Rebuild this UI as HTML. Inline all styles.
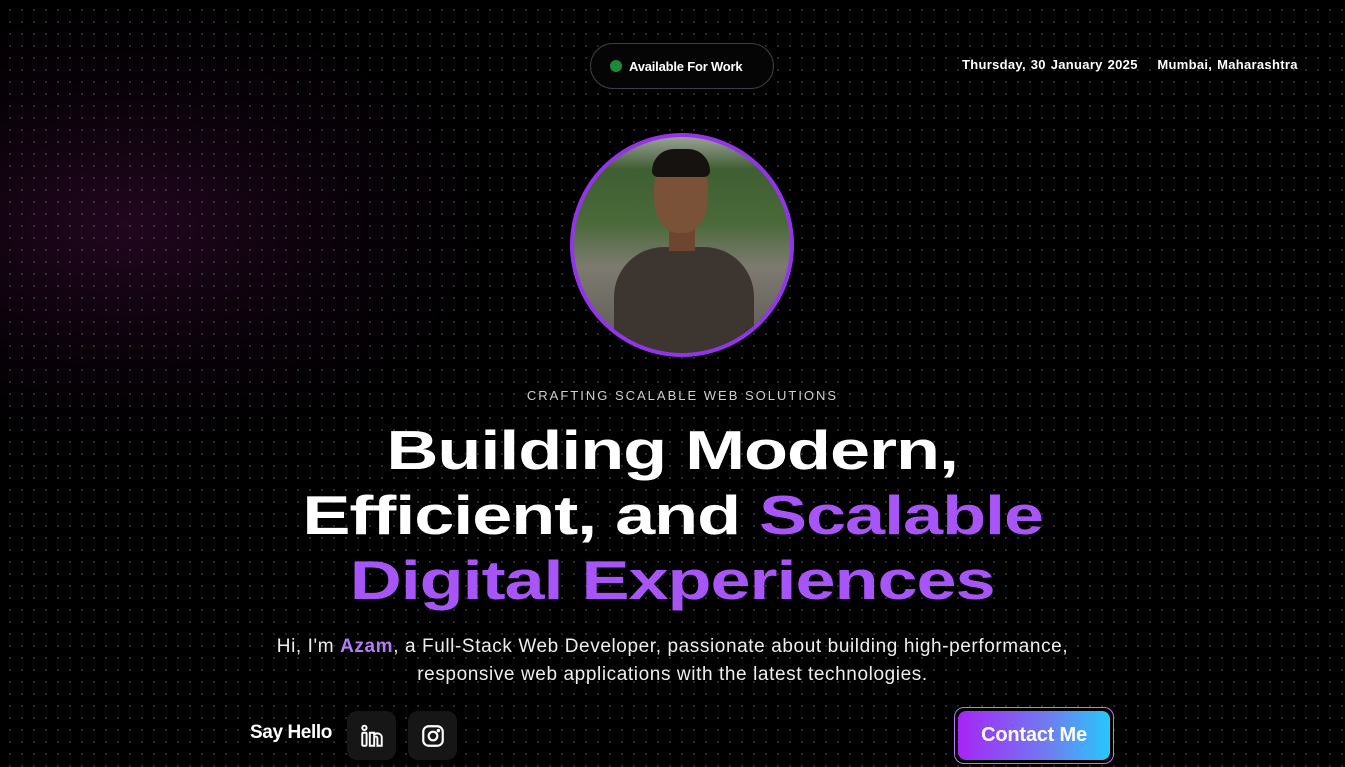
<!DOCTYPE html>
<html><head><meta charset="utf-8"><style>
*{margin:0;padding:0;box-sizing:border-box}
body{width:1345px;height:767px;overflow:hidden;background:#000;font-family:"Liberation Sans",sans-serif;color:#fff;position:relative}
.bg{position:absolute;inset:0;background-image:radial-gradient(circle,rgba(255,255,255,.16) 1px,transparent 1.3px);background-size:12px 12px;background-position:4px 4px}
.glow{position:absolute;left:-250px;top:0px;width:750px;height:450px;background:radial-gradient(ellipse at center,rgba(110,20,100,.3),rgba(60,10,60,.12) 45%,transparent 70%)}
.pill{position:absolute;left:590px;top:43px;width:184px;height:46px;border:1px solid #3a3f4a;border-radius:23px;background:#050505;display:flex;align-items:center;padding-left:19px;font-size:13px;font-weight:bold;letter-spacing:-.2px}
.pill i{width:12px;height:12px;border-radius:50%;background:#1c8a3a;margin-right:7px}
.date{position:absolute;left:962px;top:57px;font-size:13px;font-weight:bold;letter-spacing:.3px;word-spacing:1px}
.photo{position:absolute;left:570px;top:133px;width:224px;height:224px;border-radius:50%;border:4px solid #9333ea;overflow:hidden;background:linear-gradient(180deg,#9aa096 0%,#3f5e32 15%,#4a6a3a 40%,#7d7a70 60%,#5a5852 100%)}
.shirt{position:absolute;left:40px;top:110px;width:140px;height:130px;border-radius:50px 50px 0 0;background:#3d3630}
.head{position:absolute;left:80px;top:18px;width:54px;height:78px;border-radius:45%;background:#7a5238}
.hair{position:absolute;left:78px;top:12px;width:58px;height:28px;border-radius:30px 30px 8px 8px;background:#151210}
.neck{position:absolute;left:95px;top:88px;width:26px;height:26px;background:#6d4630}
.sub{position:absolute;top:388px;left:10px;width:100%;text-align:center;font-size:13px;letter-spacing:2px;color:#cfcfcf}
h1{position:absolute;top:418px;left:0;width:100%;text-align:center;font-size:55px;font-weight:bold;line-height:65px;letter-spacing:-.8px}
h1 span.l{display:inline-block;transform:scaleX(1.31)}
.p{color:#a855f7}
.para{position:absolute;top:633px;left:0;width:100%;text-align:center;font-size:19px;line-height:28px;color:#eee;letter-spacing:.6px}
.para b{color:#b57cf5}
.say{position:absolute;left:250px;top:722px;font-size:19px;font-weight:bold;letter-spacing:-.4px}
.ic{position:absolute;top:711px;width:49px;height:49px;border-radius:10px;background:#161616;display:flex;align-items:center;justify-content:center}
.cta{position:absolute;left:954px;top:707px;width:160px;height:57px;border:1px solid #b87af0;border-radius:10px;padding:3px}
.cta div{width:100%;height:100%;border-radius:8px;background:linear-gradient(90deg,#a625f5,#6e7ef0 60%,#26c8fb);display:flex;align-items:center;justify-content:center;font-size:20px;font-weight:bold;letter-spacing:-.2px}
</style></head><body>
<div class="glow"></div><div class="bg"></div>
<div class="pill"><i></i>Available For Work</div>
<div class="date">Thursday, 30 January 2025 &nbsp;&nbsp; Mumbai, Maharashtra</div>
<div class="photo"><div class="shirt"></div><div class="neck"></div><div class="head"></div><div class="hair"></div></div>
<div class="sub">CRAFTING SCALABLE WEB SOLUTIONS</div>
<h1><span class="l">Building Modern,</span><br><span class="l">Efficient, and <span class="p">Scalable</span></span><br><span class="l p">Digital Experiences</span></h1>
<div class="para">Hi, I'm <b>Azam</b>, a Full-Stack Web Developer, passionate about building high-performance,<br>responsive web applications with the latest technologies.</div>
<div class="say">Say Hello</div>
<div class="ic" style="left:347px"><svg width="26" height="26" viewBox="0 0 24 24" fill="none" stroke="#fff" stroke-width="1.8"><rect x="3" y="9" width="4" height="12" rx="1"/><circle cx="5" cy="4.5" r="2"/><path d="M10 21V9h4v2a4 4 0 0 1 7 3v7h-4v-7a1.5 1.5 0 0 0-3 0v7z"/></svg></div>
<div class="ic" style="left:408px"><svg width="26" height="26" viewBox="0 0 24 24" fill="none" stroke="#fff" stroke-width="2"><rect x="3" y="3" width="18" height="18" rx="5"/><circle cx="12" cy="12" r="4"/><circle cx="17" cy="7" r=".6" fill="#fff"/></svg></div>
<div class="cta"><div>Contact Me</div></div>
</body></html>
